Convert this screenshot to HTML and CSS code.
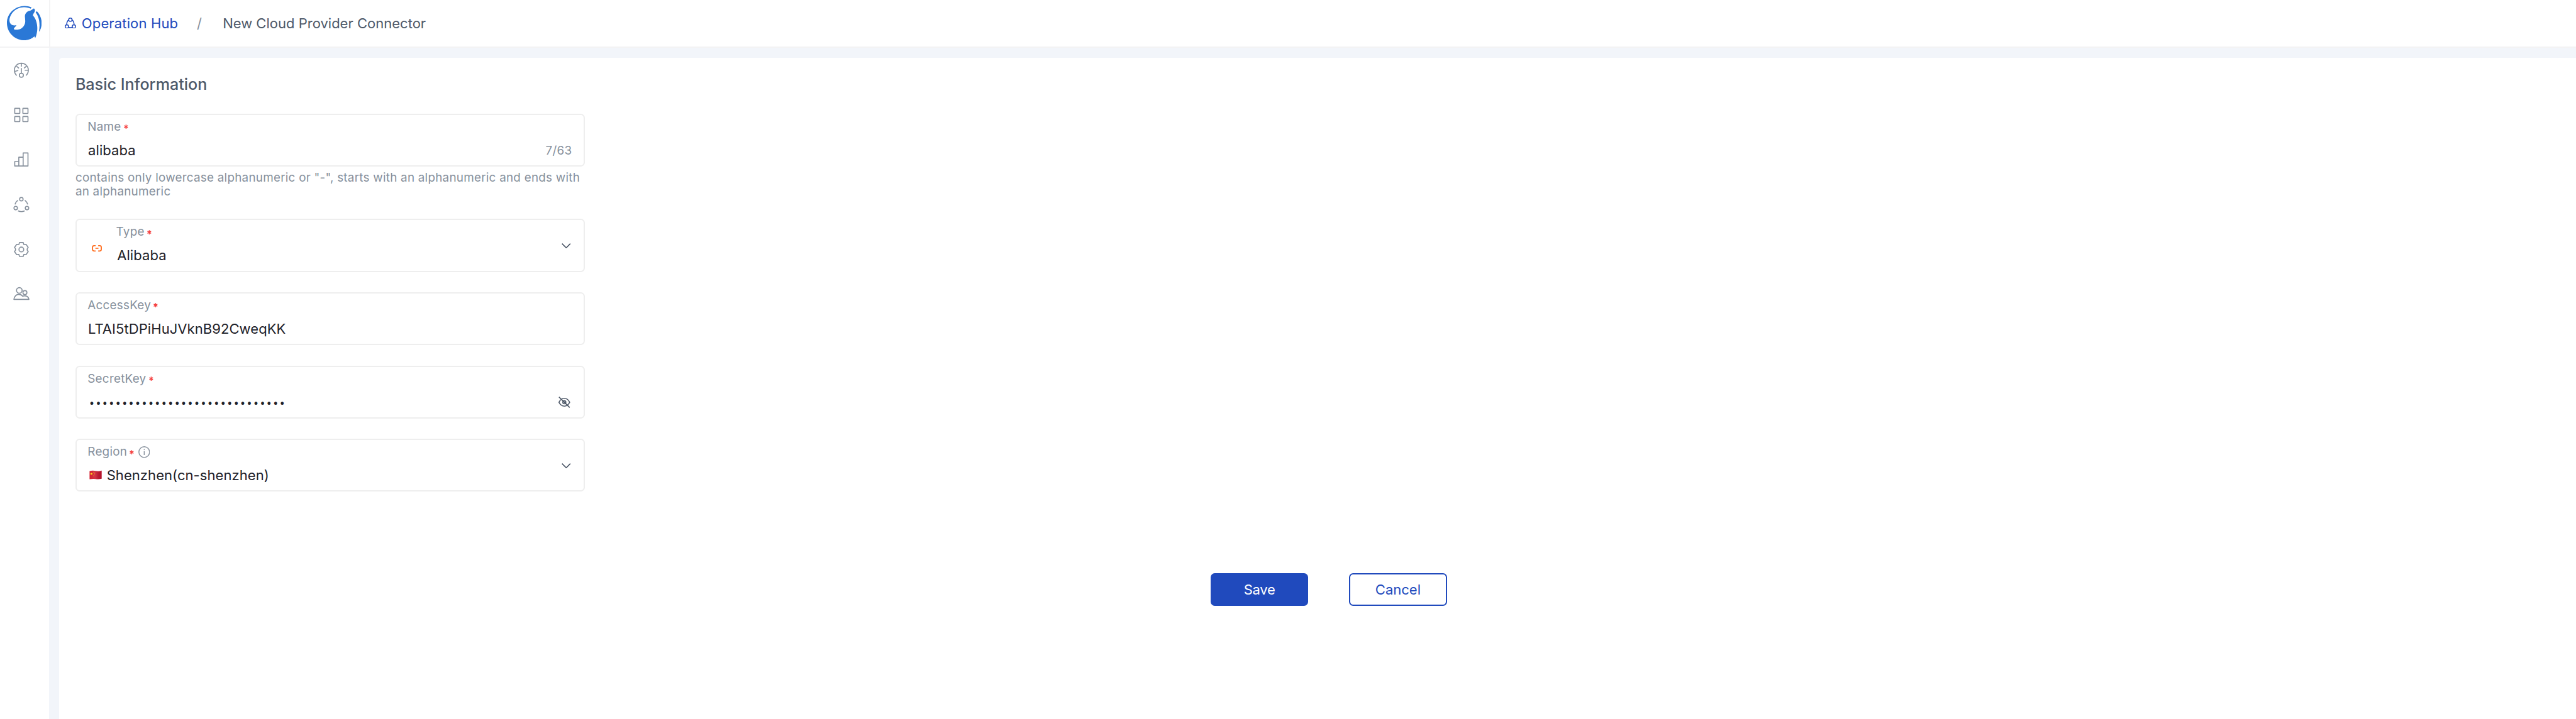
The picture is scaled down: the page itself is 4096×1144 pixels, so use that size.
FILE: index.html
```html
<!DOCTYPE html>
<html lang="en">
<head>
<meta charset="utf-8">
<title>New Cloud Provider Connector</title>
<link rel="stylesheet" href="styles.css">
</head>
<body>
<svg class="defs" aria-hidden="true">
  <symbol id="star" viewBox="0 0 8.4 9"><path d="M4.2 .2V8.8M.6 2.3L7.8 6.7M7.8 2.3L.6 6.7" fill="none" stroke="currentColor" stroke-width="1.8"/></symbol>
  <symbol id="chevron" viewBox="0 0 18 10"><path d="M.8 .8L9 9L17.200 .8" fill="none" stroke="currentColor" stroke-width="2"/></symbol>
</svg>
<div class="app">
  <aside class="sidebar">
    <a class="logo" href="#">
      <svg viewBox="42 33 204 204" fill="#2a78d6"><path d="M187 43C120 15 42 62 42 135C42 192 88 237 144 237C168 237 190 228 205 214L208 224C212 219 214 210 216 203C225 172 224 122 195 90C197 80 206 72 207 62C206 54 204 50 200 50C193 54 188 59 181 62C160 65 147 80 148 98C149 115 154 132 143 150C130 174 105 178 84 173C79 164 94 160 98 148C75 153 58 143 57 120C58 82 95 40 145 42C160 42 172 46 182 51Z"/><path d="M212 70L219 66C248 95 256 145 234 185L231 185C237 150 236 106 212 74Z"/></svg>
    </a>
    <nav class="nav">
      <svg viewBox="0 0 32 32"><path d="M7 26A13.700 13.700 0 1 1 25 26M16 3V8.700M16 11.400V21.700M6.500 8L11.300 12M21.200 12L25.800 8M2.800 18.100L10 16M22.600 15.700H29.500"/><circle cx="16" cy="25.700" r="4"/></svg>
      <svg viewBox="0 0 32 32"><rect x="3" y="3" width="10" height="10" rx=".7"/><rect x="19" y="3" width="10" height="10" rx=".7"/><rect x="3" y="19" width="10" height="10" rx=".7"/><rect x="19" y="19" width="10" height="10" rx=".7"/></svg>
      <svg viewBox="0 0 32 32"><path d="M3 28.600V19.700H11M11 28.600V11.300H19.500M19.500 28.600V3H29V28.600H3Z"/></svg>
      <svg viewBox="0 0 32 32"><circle cx="16" cy="4.800" r="3.400"/><circle cx="4.900" cy="22.300" r="3.400"/><circle cx="27.100" cy="22.300" r="3.400"/><path d="M3.500 15.200C4.400 11.600 6.300 8.900 9.200 6.900M22.800 6.900C25.700 8.900 27.600 11.600 28.500 15.200M9.500 27.800C13.600 29.700 18.400 29.700 22.500 27.800"/></svg>
      <svg viewBox="0 0 32 32"><path d="M12.400 2.300H19.600L20.800 6.200L25.100 5.800L29.500 12Q27.300 14 27.300 16T29.500 20L25.100 26.200L20.800 25.800L19.600 29.700H12.400L11.200 25.800L6.900 26.200L2.500 20Q4.700 18 4.700 16T2.500 12L6.900 5.800L11.200 6.200Z"/><circle cx="16" cy="16" r="4.700"/></svg>
      <svg viewBox="0 0 32 32"><circle cx="12" cy="8.700" r="5.500"/><circle cx="23" cy="13" r="3.900"/><path d="M1.400 26.400C2 20.500 6 16.500 11 16.500C14.500 16.500 17 17.800 18.500 20.200C24 17.800 30 20.500 30.800 26.400Z"/></svg>
    </nav>
  </aside>
  <div class="main">
    <header class="header">
      <svg class="hub" viewBox="0 0 22 22"><circle cx="11" cy="4.200" r="3.200"/><circle cx="4.100" cy="17.500" r="3.200"/><circle cx="17.900" cy="17.500" r="3.200"/><path d="M7.800 4.200C5.200 6.600 3.700 10 3.700 14.300M14.200 4.200C16.800 6.600 18.300 10 18.300 14.300M7.200 18.700C9.600 20 12.400 20 14.800 18.700"/></svg>
      <a class="crumb-link" href="#">Operation Hub</a>
      <span class="slash">/</span>
      <span class="crumb">New Cloud Provider Connector</span>
    </header>
    <main class="content">
      <form class="card">
        <h1 class="title">Basic Information</h1>
        <div class="field">
          <div class="body">
            <div class="label">Name<svg class="star"><use href="#star"/></svg></div>
            <div class="value">alibaba</div>
          </div>
          <span class="count">7/63</span>
        </div>
        <p class="hint">contains only lowercase alphanumeric or "-", starts with an alphanumeric and ends with an alphanumeric</p>
        <div class="field">
          <svg class="provider" viewBox="0 0 20 13"><path d="M7.500 1.200H4.600Q1.400 1.200 1.400 4.400V8.400Q1.400 11.500 4.600 11.500H7.500M12.500 1.200H15.400Q18.600 1.200 18.600 4.400V8.400Q18.600 11.500 15.400 11.500H12.500"/><path class="dash" d="M7 6.300H13"/></svg>
          <div class="body">
            <div class="label">Type<svg class="star"><use href="#star"/></svg></div>
            <div class="value typed">Alibaba</div>
          </div>
          <svg class="chevron"><use href="#chevron"/></svg>
        </div>
        <div class="field">
          <div class="body">
            <div class="label">AccessKey<svg class="star"><use href="#star"/></svg></div>
            <div class="value">LTAI5tDPiHuJVknB92CweqKK</div>
          </div>
        </div>
        <div class="field">
          <div class="body">
            <div class="label">SecretKey<svg class="star"><use href="#star"/></svg></div>
            <div class="value secret">••••••••••••••••••••••••••••••</div>
          </div>
          <svg class="eye" viewBox="0 0 23 22"><path d="M1 11.300C6 .7 17 .7 22 11.300C17 21.300 6 21.300 1 11.300ZM1 .8L22 21.400"/><circle cx="11.500" cy="11.200" r="3"/></svg>
        </div>
        <div class="field">
          <div class="body">
            <div class="label">Region<svg class="star"><use href="#star"/></svg><svg class="info" viewBox="0 0 23 23"><circle cx="11.500" cy="11.500" r="10.500"/><path d="M11.500 9.500V17.200M11.500 5.500V7.500"/></svg></div>
            <div class="value">
              <svg class="flag" viewBox="0 0 25 19"><defs><linearGradient id="cloth"><stop offset="0" stop-color="#d4202f"/><stop offset=".45" stop-color="#d23345"/><stop offset=".75" stop-color="#b81930"/><stop offset="1" stop-color="#b5122a"/></linearGradient></defs><path d="M.5 2Q6 .3 12.500 1.600T24.300 .8V17Q18.500 18.300 12.500 17.500T.5 18Z" fill="url(#cloth)"/><path d="M4.200 4.800L4.900 6.600L6.800 6.700L5.300 7.900L5.800 9.700L4.200 8.700L2.600 9.700L3.100 7.900L1.600 6.700L3.500 6.600Z" fill="#ffe11a"/><path d="M8 3.500h1.200v1.200H8zM9.800 5.500H11v1.200H9.800zM9.600 8.500h1.200v1.200H9.600zM8 10.500h1.200v1.200H8z" fill="#f3c020"/></svg>
              <span>Shenzhen(cn-shenzhen)</span>
            </div>
          </div>
          <svg class="chevron"><use href="#chevron"/></svg>
        </div>
        <div class="actions">
          <button class="btn primary" type="button">Save</button>
          <button class="btn" type="button">Cancel</button>
        </div>
      </form>
    </main>
  </div>
</div>
</body>
</html>
```
FILE: styles.css
```css
html { font-size: 8.1013px; }
* { box-sizing: border-box; }
body {
  margin: 0;
  font-family: Inter, "Liberation Sans", sans-serif;
  color: #1d2129;
  background: #fff;
}
svg { display: block; flex: none; }
.defs { position: absolute; width: 0; height: 0; }
.app { display: flex; height: 100vh; overflow: hidden; }

.sidebar { width: 9.6rem; flex: none; background: #fff; }
.logo {
  display: block;
  height: 9.4rem;
  padding: 1.1rem 0 0 1.4rem;
  border-bottom: 2px solid #f3f3f4;
}
.logo svg { width: 6.8rem; height: 6.8rem; }
.nav {
  display: flex;
  flex-direction: column;
  gap: 5.6rem;
  padding: 2.8rem 0 0 2.6rem;
}
.nav svg {
  width: 3.2rem;
  height: 3.2rem;
  fill: none;
  stroke: #86909c;
  stroke-width: 2;
  stroke-linejoin: round;
}

.main { flex: 1; min-width: 0; display: flex; flex-direction: column; }
.header {
  display: flex;
  align-items: center;
  height: 9.4rem;
  flex: none;
  padding: 0 0 .05rem 2.9rem;
  border-bottom: 2px solid #f3f3f4;
  border-left: 2px solid #f3f3f4;
  background: #fff;
  font-size: 2.72rem;
  line-height: 4rem;
  white-space: nowrap;
}
.hub {
  width: 2.2rem;
  height: 2.2rem;
  margin: -.1rem 1.08rem 0 0;
  fill: none;
  stroke: #204abd;
  stroke-width: 1.8;
}
.crumb-link { color: #204abd; text-decoration: none; letter-spacing: .017rem; }
.slash { width: 1rem; margin: 0 4.08rem 0 3.68rem; color: #86909c; }
.crumb { color: #4e5969; }

.content { flex: 1; min-height: 0; padding: 2rem 0 0 2rem; background: #f2f5fa; }
.card {
  height: 100%;
  padding: 3.16rem 0 0 3.2rem;
  background: #fff;
  border-top-left-radius: .6rem;
}
.title {
  margin: 0 0 3.74rem;
  font-size: 3.1rem;
  line-height: 4rem;
  font-weight: 500;
  color: #4e5969;
}
.field {
  display: flex;
  width: 100rem;
  height: 10.4rem;
  margin-bottom: 4rem;
  padding: .87rem 2.4rem 0 2.15rem;
  border: 2px solid #eee;
  border-radius: .8rem;
}
.body { flex: 1; padding-top: .14rem; }
.label {
  display: flex;
  align-items: center;
  height: 2.8rem;
  font-size: 2.33rem;
  line-height: 2.8rem;
  letter-spacing: .03rem;
  color: #86909c;
}
.star { width: .84rem; height: .9rem; margin: -.1rem 0 0 .53rem; color: #f53f3f; }
.info {
  width: 2.3rem;
  height: 2.3rem;
  margin: -.1rem 0 0 .8rem;
  fill: none;
  stroke: #86909c;
  stroke-width: 1.7;
}
.value {
  display: flex;
  align-items: center;
  height: 3.6rem;
  margin-top: 1.4rem;
  padding-left: .1rem;
  font-size: 2.72rem;
  line-height: 3.6rem;
  letter-spacing: .007rem;
}
.value.typed { padding-left: .2rem; }
.value.secret { padding-left: .3rem; font-size: 1.86rem; letter-spacing: .244rem; }
.count {
  align-self: flex-start;
  margin: 4.36rem -.12rem 0 0;
  font-size: 2.33rem;
  line-height: 3.6rem;
  letter-spacing: .04rem;
  color: #86909c;
}
.chevron { width: 1.8rem; height: 1rem; margin: 3.65rem .1rem 0 0; color: #4e5969; }
.eye {
  width: 2.3rem;
  height: 2.2rem;
  margin: 4.98rem .25rem 0 0;
  fill: none;
  stroke: #4e5969;
  stroke-width: 2;
}
.provider {
  width: 2rem;
  height: 1.3rem;
  margin: 4.05rem 2.8rem 0 .8rem;
  fill: none;
  stroke: #ff6a1a;
  stroke-width: 2.2;
}
.dash { stroke-width: 1.8; }
.flag { width: 2.5rem; height: 1.9rem; margin: -.4rem .95rem 0 .2rem; }
.hint {
  width: 100rem;
  margin: -3.08rem 0 3.98rem;
  font-size: 2.33rem;
  line-height: 2.7rem;
  letter-spacing: .029rem;
  color: #86909c;
}
.actions {
  display: flex;
  justify-content: center;
  gap: 8rem;
  margin-top: 16rem;
  padding-left: 1.2rem;
}
.btn {
  width: 19.2rem;
  height: 6.4rem;
  padding: .15rem 0 0;
  border: 2px solid #204abd;
  border-radius: .8rem;
  background: #fff;
  color: #204abd;
  font: 2.72rem/3.6rem Inter, "Liberation Sans", sans-serif;
}
.btn.primary { background: #204abd; color: #fff; letter-spacing: -.03rem; }
```
